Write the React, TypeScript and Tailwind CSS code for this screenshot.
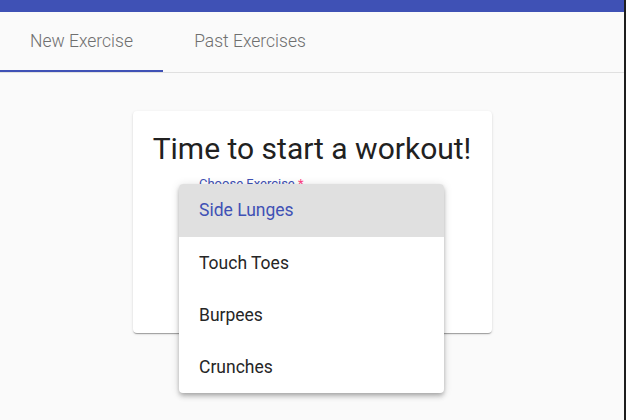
import React from "react";

export default function App() {
  const items = ["Side Lunges", "Touch Toes", "Burpees", "Crunches"];
  return (
    <div
      className="relative flex h-[420px] w-[626px] overflow-hidden bg-[#fafafa]"
      style={{ fontFamily: "Roboto, 'Liberation Sans', sans-serif" }}
    >
      <div className="flex w-[624px] flex-col">
        <div className="h-[12px] bg-[#3f51b5]" />
        <div className="flex h-[61px] border-b border-[#e0e0e0]">
          <div className="relative flex w-[163px] items-center justify-center pb-[2px] text-[17.5px] font-light text-[#6f6f6f]">
            New Exercise
            <div className="absolute bottom-0 left-0 h-[2px] w-full bg-[#3f51b5]" />
          </div>
          <div className="flex w-[174px] items-center justify-center pb-[2px] text-[17.5px] font-light text-[#6f6f6f]">
            Past Exercises
          </div>
        </div>
        <div className="flex justify-center pt-[38px]">
          <div className="flex h-[222px] w-[359px] flex-col items-center rounded-[4px] bg-white pt-[20px] shadow-[0_2px_1px_-1px_rgba(0,0,0,0.2),0_1px_1px_0_rgba(0,0,0,0.14),0_1px_3px_0_rgba(0,0,0,0.12)]">
            <div className="text-[30px] leading-[36px] text-[#212121]">Time to start a workout!</div>
            <div className="mt-[10px] w-[266px] pl-[20px] text-[13px] leading-[14px] text-[#3f51b5]">
              Choose Exercise <span className="text-[#ff4081]">*</span>
            </div>
          </div>
        </div>
      </div>
      <div className="w-[2px] bg-[#1e1e1e]" />
      <div className="absolute left-[179px] top-[184px] w-[265px] overflow-hidden rounded-[4px] bg-white shadow-[0_2px_4px_-1px_rgba(0,0,0,0.2),0_4px_5px_0_rgba(0,0,0,0.14),0_1px_10px_0_rgba(0,0,0,0.12)]">
        {items.map((t, i) => (
          <div
            key={t}
            className={
              i === 0
                ? "flex h-[53px] items-center bg-[#e0e0e0] pl-[20px] text-[17.5px] text-[#3f51b5]"
                : "flex h-[52px] items-center pl-[20px] text-[17.5px] text-[#262626]"
            }
          >
            {t}
          </div>
        ))}
      </div>
    </div>
  );
}
